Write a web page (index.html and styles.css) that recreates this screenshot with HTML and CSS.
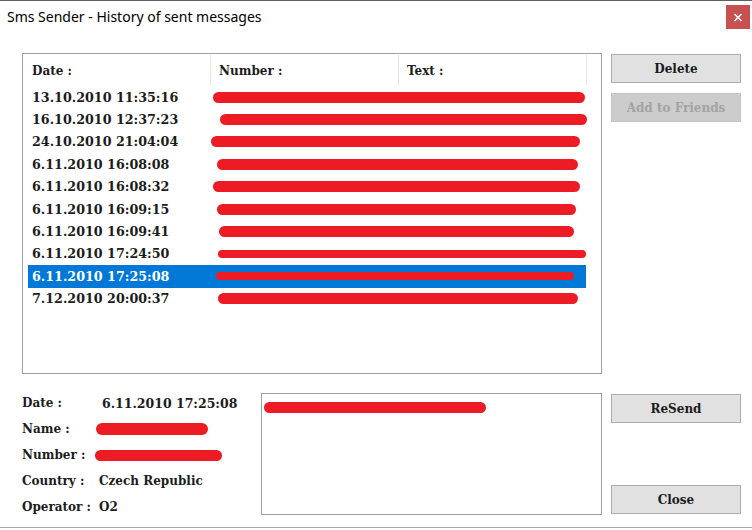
FILE: index.html
```html
<!DOCTYPE html>
<html>
<head>
<meta charset="utf-8">
<title>Sms Sender - History of sent messages</title>
<link rel="stylesheet" href="styles.css">
</head>
<body>
<div class="window">
  <div class="titlebar">
    <div class="title">Sms Sender - History of sent messages</div>
    <div class="close-x">
      <svg width="24" height="24" viewBox="0 0 24 24"><path d="M8.5 9 L15.5 16 M15.5 9 L8.5 16" stroke="#fff" stroke-width="1.6" fill="none"/></svg>
    </div>
  </div>

  <div class="top">
    <div class="list">
      <div class="list-head">
        <div class="hcell hcell-date">Date :</div>
        <div class="hcell">Number :</div>
        <div class="hcell">Text :</div>
      </div>
      <div class="rows">
        <div class="row"><span class="date">13.10.2010 11:35:16</span><span class="mark" style="margin-left:3px;width:372px"></span></div>
        <div class="row"><span class="date">16.10.2010 12:37:23</span><span class="mark" style="margin-left:10px;width:367px"></span></div>
        <div class="row"><span class="date">24.10.2010 21:04:04</span><span class="mark" style="margin-left:1px;width:369px"></span></div>
        <div class="row"><span class="date">6.11.2010 16:08:08</span><span class="mark" style="margin-left:7px;width:361px"></span></div>
        <div class="row"><span class="date">6.11.2010 16:08:32</span><span class="mark" style="margin-left:3px;width:367px"></span></div>
        <div class="row"><span class="date">6.11.2010 16:09:15</span><span class="mark" style="margin-left:7px;width:359px"></span></div>
        <div class="row"><span class="date">6.11.2010 16:09:41</span><span class="mark" style="margin-left:9px;width:355px"></span></div>
        <div class="row"><span class="date">6.11.2010 17:24:50</span><span class="mark thin" style="margin-left:8px;width:368px"></span></div>
        <div class="row selected"><span class="date">6.11.2010 17:25:08</span><span class="mark thin" style="margin-left:6px;width:358px"></span></div>
        <div class="row"><span class="date">7.12.2010 20:00:37</span><span class="mark" style="margin-left:8px;width:360px"></span></div>
      </div>
    </div>
    <div class="btn-col">
      <button class="btn">Delete</button>
      <button class="btn disabled">Add to Friends</button>
    </div>
  </div>

  <div class="bottom">
    <div class="details">
      <div class="label">Date :</div><div class="value value-date">6.11.2010 17:25:08</div>
      <div class="label">Name :</div><div class="value"><span class="mark" style="margin-left:-3px;width:112px;height:12px"></span></div>
      <div class="label">Number :</div><div class="value"><span class="mark" style="margin-left:-4px;width:127px;height:11px"></span></div>
      <div class="label">Country :</div><div class="value">Czech Republic</div>
      <div class="label">Operator :</div><div class="value">O2</div>
    </div>
    <div class="msgbox">
      <span class="mark msgmark" style="width:222px"></span>
    </div>
    <div class="btn-col2">
      <button class="btn">ReSend</button>
      <button class="btn">Close</button>
    </div>
  </div>
</div>
</body>
</html>
```

FILE: styles.css
```css
html, body {
  margin: 0;
  padding: 0;
  background: #ffffff;
}
body {
  width: 752px;
  height: 530px;
  overflow: hidden;
}
.window {
  box-sizing: border-box;
  width: 752px;
  height: 528px;
  border-top: 1px solid #5f5f5f;
  border-bottom: 1px solid #a8a8a8;
  background: #ffffff;
  font-family: "DejaVu Serif", "Liberation Serif", serif;
  font-weight: bold;
  color: #1c1c1c;
}
.titlebar {
  height: 52px;
  display: flex;
  justify-content: space-between;
  align-items: flex-start;
}
.title {
  font-family: "Noto Sans", "Open Sans", sans-serif;
  font-weight: normal;
  font-size: 14px;
  line-height: 20px;
  color: #000;
  padding: 6px 0 0 7px;
}
.close-x {
  width: 24px;
  height: 24px;
  margin: 4px 2px 0 0;
  background: #c75050;
}
.close-x svg { display: block; }

.top {
  display: flex;
  padding-left: 22px;
  gap: 9px;
  height: 321px;
}
.list {
  box-sizing: border-box;
  width: 580px;
  height: 321px;
  border: 1px solid #a0a0a0;
}
.list-head {
  display: flex;
  height: 32px;
  padding-top: 1px;
  box-sizing: border-box;
}
.hcell {
  box-sizing: border-box;
  width: 188px;
  height: 30px;
  padding-top: 3px;
  line-height: 27px;
  font-size: 12px;
  padding-left: 8px;
  border-right: 1px solid #e5e5e5;
}
.hcell-date { padding-left: 9px; }
.rows {
  padding-left: 5px;
}
.row {
  width: 558px;
  height: 22.4px;
  display: flex;
  align-items: center;
  font-size: 12.7px;
}
.row .date {
  box-sizing: border-box;
  width: 182px;
  flex: none;
  padding-left: 4px;
}
.row.selected {
  background: #0078d7;
  color: #ffffff;
}
.mark {
  display: inline-block;
  flex: none;
  height: 11px;
  background: #ed1c24;
  border-radius: 6px;
}
.mark.thin { height: 8px; }

.btn-col {
  display: flex;
  flex-direction: column;
  gap: 10px;
  padding-top: 1px;
}
.btn {
  box-sizing: border-box;
  width: 130px;
  height: 29px;
  margin: 0;
  padding: 0;
  background: #e1e1e1;
  border: 1px solid #adadad;
  font-family: "DejaVu Serif", "Liberation Serif", serif;
  font-weight: bold;
  font-size: 12px;
  color: #1c1c1c;
}
.btn.disabled {
  background: #cccccc;
  border-color: #c4c4c4;
  color: #a3a3a3;
}

.bottom {
  display: flex;
  padding-left: 22px;
  margin-top: 16px;
}
.details {
  width: 239px;
  display: grid;
  grid-template-columns: 77px auto;
  grid-auto-rows: 26px;
  align-items: center;
  font-size: 12px;
}
.value { display: flex; align-items: center; }
.value-date { padding-left: 3px; font-size: 12.5px; }
.msgbox {
  box-sizing: border-box;
  width: 341px;
  height: 122px;
  margin-top: 3px;
  border: 1px solid #a0a0a0;
  padding: 8px 0 0 2px;
}
.msgmark { display: block; }
.btn-col2 {
  margin-left: 9px;
  margin-top: 4px;
  height: 120px;
  display: flex;
  flex-direction: column;
  justify-content: space-between;
}
```
